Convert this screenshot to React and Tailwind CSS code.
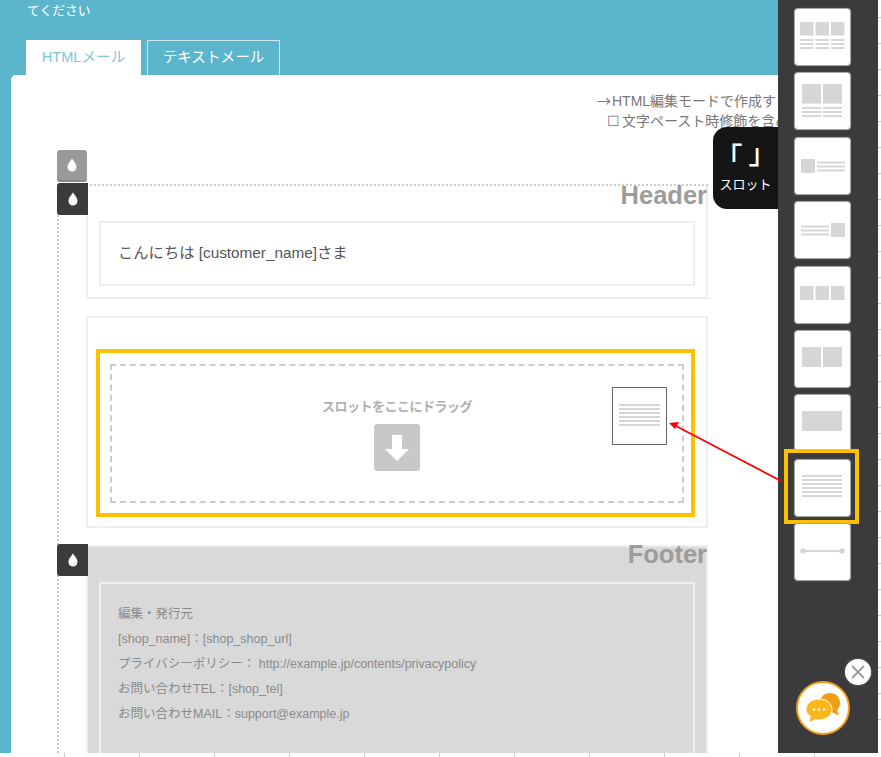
const Drop = () => (
    <svg width="14" height="16" viewBox="0 0 14 16">
        <path d="M7 1.500C5.800 3.600 2.500 6.600 2.500 10a4.500 4.500 0 0 0 9 0C11.500 6.600 8.200 3.600 7 1.500z" fill="#fff" />
        <path d="M9.300 9.500c.2 1.900-.9 3.100-2.300 3.500 1.700.3 3.200-1.300 2.300-3.500z" fill="#c9b79c" />
    </svg>
)

const ThumbArt = ({ rects = [], children }) => (
    <svg width="55" height="56" viewBox="0 0 55 56">
        {rects.map(([x, y, w, h], i) => (
            <rect key={i} x={x} y={y} width={w} height={h} fill="#d6d6d6" />
        ))}
        {children}
    </svg>
)

const threeLines = (x, w, ys) => ys.map((y) => [x, y, w, 2])
const sixLines = threeLines(7, 40, [15, 19, 23, 27, 31, 35])
const slotLines = threeLines(6, 41, [16, 20, 24, 28, 32, 36])

const tiles = [
    [
        [5, 13, 13.5, 13.5], [20.5, 13, 13.5, 13.5], [36, 13, 13.5, 13.5],
        ...threeLines(5, 13.5, [30, 34, 38]), ...threeLines(20.5, 13.5, [30, 34, 38]), ...threeLines(36, 13.5, [30, 34, 38]),
    ],
    [
        [7, 11, 19, 19.5], [28, 11, 19, 19.5],
        ...threeLines(7, 19, [34, 38, 42]), ...threeLines(28, 19, [34, 38, 42]),
    ],
    [[6, 21, 14, 14], ...threeLines(22, 28, [23.5, 27.5, 31.5])],
    [[36, 21, 14, 14], ...threeLines(6, 28, [23.5, 27.5, 31.5])],
    [[5, 19, 13.5, 14], [20.5, 19, 13.5, 14], [36, 19, 13.5, 14]],
    [[7, 16, 19, 20], [28, 16, 19, 20]],
    [[7, 16, 40, 20]],
    sixLines,
]

const Tile = ({ rects, children, highlight }) => (
    <div className="relative w-[57px] h-[58px] bg-white rounded-[4px] border border-[#a5a5a5] shadow-[0_0_1px_#888]">
        <ThumbArt rects={rects}>{children}</ThumbArt>
        {highlight && <div className="absolute left-[-11px] right-[-9px] top-[-11px] bottom-[-8px] border-4 border-[#ffc000]"></div>}
    </div>
)

const DropBtn = ({ className }) => (
    <div className={`flex items-center justify-center h-[32px] rounded-[3px] ${className}`}>
        <Drop />
    </div>
)

const footerLines = [
    '編集・発行元',
    '[shop_name]：[shop_shop_url]',
    'プライバシーポリシー： http://example.jp/contents/privacypolicy',
    'お問い合わせTEL：[shop_tel]',
    'お問い合わせMAIL：support@example.jp',
]

const App = () => {
    return (
        <div className="relative flex flex-col w-[881px] h-[757px] overflow-hidden bg-white font-['Liberation_Sans','Noto_Sans_CJK_JP',sans-serif]">
            <div className="flex h-[753px]">
                <main className="relative flex flex-col w-[778px] bg-[#5bb5cc] overflow-hidden">
                    <p className="h-[40px] pl-[27px] pt-[2px] text-[12.8px] leading-[17px] text-white">てください</p>
                    <div className="flex h-[35px] pl-[26px] gap-[6px]">
                        <div className="flex items-center justify-center w-[115px] bg-white text-[14.6px] text-[#7cc6da]">HTMLメール</div>
                        <div className="flex items-center justify-center w-[133px] border border-b-0 border-[#cfe8ef] text-[14.6px] text-white">テキストメール</div>
                    </div>
                    <div className="flex flex-col flex-1 min-h-0 ml-[11px] pt-[15px] bg-white rounded-tl-[5px]">
                        <div className="ml-[586px] h-[21px] text-[14px] leading-[20px] text-[#777] whitespace-nowrap">
                            <span className="font-['Noto_Sans_CJK_JP'] mr-[1px]">→</span>HTML編集モードで作成する
                        </div>
                        <div className="ml-[596px] h-[21px] text-[14px] leading-[21px] text-[#777] whitespace-nowrap">
                            <span className="mr-[2px]">☐</span>文字ペースト時修飾を含める
                        </div>
                        <DropBtn className="w-[30px] ml-[46px] mt-[18px] bg-[#999999] border-b-2 border-[#888]" />
                        <div className="flex flex-col flex-1 min-h-0 gap-[17px] w-[651px] ml-[46px] mt-[2px] pl-[27px] border-l-2 border-t-2 border-dotted border-[#cccccc]">
                            <section className="relative h-[113px] border-2 border-t-0 border-[#eeeeee]">
                                <DropBtn className="absolute left-[-31px] top-[-3px] w-[31px] bg-[#3b3a3c] rounded-r-none" />
                                <div className="h-[35px] -mr-px text-right text-[25.5px] leading-[19px] font-bold text-[#9c9c9c]">Header</div>
                                <div className="flex items-center h-[65px] mx-[11px] pl-[17px] border-2 border-[#eeeeee] text-[15.3px] text-[#555]">
                                    こんにちは [customer_name]さま
                                </div>
                            </section>
                            <section className="h-[212px] px-[8px] pt-[31px] border-2 border-[#eeeeee]">
                                <div className="h-[168px] w-[599px] p-[10px] pt-[11px] pr-[7px] border-4 border-[#ffc000]">
                                    <div className="relative flex flex-col items-center h-[139px] pt-[31px] border-2 border-dashed border-[#cccccc]">
                                        <span className="text-[13px] leading-[20px] tracking-[-0.5px] font-bold text-[#b0b0b0]">スロットをここにドラッグ</span>
                                        <div className="flex items-center justify-center w-[46px] h-[47px] mt-[7px] bg-[#c8c8c8] rounded-[3px]">
                                            <svg width="26" height="28" viewBox="0 0 26 28">
                                                <path d="M8 1h10v14h7L13 27 1 15h7z" fill="#fff" />
                                            </svg>
                                        </div>
                                        <div className="absolute left-[500px] top-[21px] w-[55px] h-[58px] bg-white border border-[#666]">
                                            <ThumbArt rects={slotLines} />
                                        </div>
                                    </div>
                                </div>
                            </section>
                            <section className="relative flex-1 min-h-0 bg-[#d9d9d9] border-2 border-b-0 border-[#eeeeee]">
                                <DropBtn className="absolute left-[-31px] top-[-3px] w-[31px] bg-[#3b3a3c] rounded-r-none" />
                                <div className="h-[35px] -mr-px text-right text-[25.5px] leading-[15px] font-bold text-[#9c9c9c]">Footer</div>
                                <div className="h-[300px] mx-[11px] pl-[17px] pt-[18px] border-2 border-[#eeeeee] text-[12.5px] leading-[25px] text-[#8a8a8a]">
                                    {footerLines.map((line) => (
                                        <div key={line}>{line}</div>
                                    ))}
                                </div>
                            </section>
                        </div>
                    </div>
                    <div className="absolute right-0 top-[127px] flex flex-col items-center w-[65px] h-[82px] pt-[14px] bg-[#151515] rounded-l-[14px] text-white">
                        <div className="flex justify-center gap-[6px] h-[30px] text-[28px] leading-[30px] font-medium">
                            <span className="translate-y-[3px]">「</span>
                            <span className="-translate-y-[1px]">」</span>
                        </div>
                        <span className="mt-[5px] text-[13px] leading-[18px] whitespace-nowrap">スロット</span>
                    </div>
                </main>
                <aside className="flex flex-col w-[100px] pt-[8px] pl-[16px] gap-[6.4px] bg-[#3b3a3c]">
                    {tiles.map((rects, i) => (
                        <Tile key={i} rects={rects} highlight={i === 7} />
                    ))}
                    <Tile>
                        <line x1="8" y1="27" x2="47" y2="27" stroke="#d6d6d6" strokeWidth="2" />
                        <circle cx="8" cy="27" r="2.8" fill="#d6d6d6" />
                        <circle cx="47" cy="27" r="2.8" fill="#d6d6d6" />
                    </Tile>
                    <div className="relative w-[54px] h-[54px] mt-auto mb-[18px] ml-[2px] bg-white rounded-full border-2 border-[#f29d18]">
                        <svg width="50" height="50" viewBox="0 0 50 50">
                            <path d="M32 10c6 0 10 4 10 10 0 3-1 5-2.500 6.500 0 2 .5 4 2 5.500-2.500 0-5-1-6.500-2.500-5 1-13-2-13-9.500 0-6 4-10 10-10z" fill="#f29d18" />
                            <path d="M21 16c7.500 0 13 4.500 13 10.500S28.500 37 21 37c-1.500 0-3-.2-4-.5-1.500 1.500-4 2.500-7 2.500 1.500-1.500 2.300-3.500 2.300-5.500C9.500 31.500 8 29 8 26.500 8 20.500 13.500 16 21 16z" fill="#fdb71a" stroke="#fff" strokeWidth="1" />
                            <circle cx="16" cy="26.5" r="1.3" fill="#fff" />
                            <circle cx="21" cy="26.5" r="1.3" fill="#fff" />
                            <circle cx="26" cy="26.5" r="1.3" fill="#fff" />
                        </svg>
                        <div className="absolute left-[47px] top-[-24px] flex items-center justify-center w-[26px] h-[26px] bg-white rounded-full shadow-[0_0_2px_#888]">
                            <svg width="16" height="16" viewBox="0 0 16 16">
                                <path d="M2 2l12 12M14 2L2 14" stroke="#9a9a9a" strokeWidth="1.8" />
                            </svg>
                        </div>
                    </div>
                </aside>
                <div className="flex flex-col w-[3px] pt-[17px] gap-[25px]">
                    {Array.from({ length: 28 }).map((_, i) => (
                        <span key={i} className="shrink-0 h-px bg-[#cccccc]"></span>
                    ))}
                </div>
            </div>
            <div className="flex h-[4px] pl-[64px] gap-[74px]">
                {Array.from({ length: 11 }).map((_, i) => (
                    <span key={i} className="w-px bg-[#cccccc]"></span>
                ))}
            </div>
            <svg className="absolute left-0 top-0 pointer-events-none" width="881" height="757">
                <line x1="781" y1="481" x2="676" y2="426" stroke="#ff0000" strokeWidth="1.8" />
                <path d="M669 423l10-1-4 7z" fill="#ff0000" />
            </svg>
        </div>
    )
}

export default App
